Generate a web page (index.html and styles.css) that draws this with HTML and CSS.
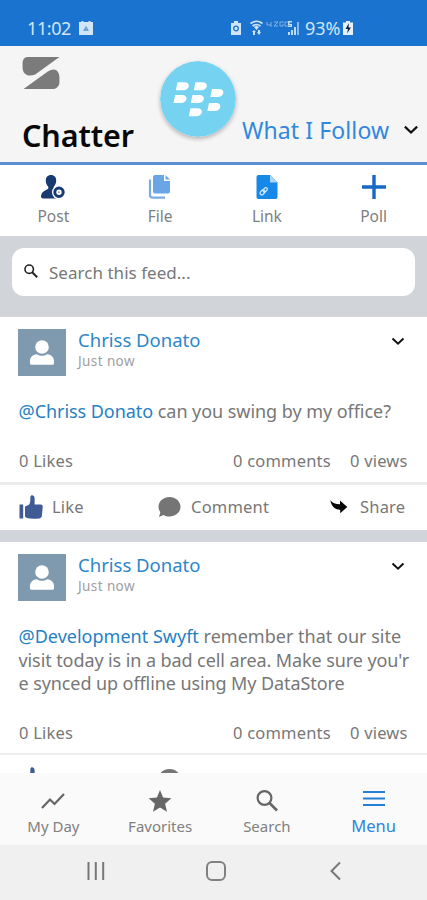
FILE: index.html
```html
<!DOCTYPE html>
<html lang="en">
<head>
<meta charset="utf-8">
<title>Chatter</title>
<link rel="stylesheet" href="styles.css">
</head>
<body>
<svg class="defs" aria-hidden="true">
  <symbol id="person" viewBox="0 0 48 47"><circle cx="24" cy="18" r="6.800" fill="#fff"/><path d="M12 34.500v-2.500c0-4 3-6.500 7-6.700 3 2 7 2 10 0 4 .2 7 2.700 7 6.700v2.500q0 1.300-1.500 1.300h-21q-1.500 0-1.500-1.300z" fill="#fff"/></symbol>
  <symbol id="chevron" viewBox="0 0 14 9"><path d="M1.500 1.500 7 6.700l5.500-5.200" fill="none" stroke="#111" stroke-width="2"/></symbol>
  <symbol id="thumb" viewBox="0 0 24 24"><path d="M.5 9.500h3.700v14H.5zM6 11.500l4-1.800c1.500-2 1.200-4 1.400-7.700.2-2.700 4-2.300 4.200 1v6.500h6c1.600 0 2.300 1 2.100 2.600l-.8 8.700c-.2 1.600-1 2.400-2.500 2.600-4.400.5-9 .6-12.400-.4l-2-1.200z" fill="#3f5a94"/></symbol>
  <symbol id="bubble" viewBox="0 0 22 20"><path d="M11 0c6 0 11 4.300 11 9.800s-5 9.700-11 9.700c-2.300 0-4.300-.5-6-1.500L.5 20l1.300-4.800A9 9 0 0 1 0 9.800C0 4.300 5 0 11 0z" fill="#757575"/></symbol>
  <symbol id="share" viewBox="0 0 18 15"><path d="M.3 1c2 3.200 5.200 4.300 9.700 4.300V1.500L17.300 8 10.200 14.200v-3.500C5.300 11 1.300 7.500.3 1z" fill="#080808"/></symbol>
</svg>
<div class="phone">
  <div class="status">
    <span class="clock">11:02</span>
    <svg class="cal" viewBox="0 0 14 14"><path d="M0 1h2.500V0h2v1h5V0h2v1H14v13H0z" fill="#d2e5f8"/><path d="M7 4.500 10 10H4z" fill="#6ca3dd"/></svg>
    <svg class="signals" viewBox="0 0 70 18">
      <path d="M1 4h3V2h4v2h3v12H1z" fill="#d2e5f8"/><circle cx="6" cy="9.500" r="2.300" fill="none" stroke="#1a73ce" stroke-width="1.300"/>
      <path d="M20.500 4.500q6-4.500 12 0M22.500 7q4-3 8 0" fill="none" stroke="#d2e5f8" stroke-width="1.700"/><path d="m24 8 2.500-1.500L29 8l-2.500 3zM22 13l2-2 2 2h-1v3h-2v-3zM27 13h1v-2h2v2h1l-2 3z" fill="#d2e5f8"/>
      <path d="M37 3v3h4m0-3v5m3-5h4l-4 4h4m6-4h-4v4h3V5m6-2h-4v4h4" fill="none" stroke="#8ab8e8" stroke-width=".9"/>
      <path d="M58 2h4v1.500h-2.500V5H62v3h-4V6.500h2.500V6H58zM58 13h2v3h-2zM61 11h2v5h-2zM64 8h2v8h-2z" fill="#c0dbf5"/><path d="M67 3h2v13h-2z" fill="#8ab8e8"/>
    </svg>
    <span class="percent">93%</span>
    <svg class="battery" viewBox="0 0 10 14"><path d="M0 1.500h3V0h4v1.500h3V14H0z" fill="#e4f0fb"/><path d="M6 2 2.500 8H5l-1 4.500L8 6.500H5.500z" fill="#123"/></svg>
  </div>
  <header class="header">
    <div class="brand">
      <svg class="logo" viewBox="0 0 38 33"><path d="M5 0h33L13 18C5 21 0 17 0 11V6c0-3 2-6 5-6zM1 33 26 15c7-5 12-1 12 6v5c0 4-3 7-7 7z" fill="#7b7b7b"/></svg>
      <h1 class="title">Chatter</h1>
    </div>
    <div class="filter"><span class="filter-name">What I Follow</span><svg class="filter-chevron"><use href="#chevron"/></svg></div>
    <svg class="badge" viewBox="0 0 76 76">
      <circle cx="38" cy="38" r="38" fill="#75d3f1"/>
      <g fill="#fff">
        <path id="seg" d="M17.500 21.300h7c6.500 0 5.500 8-1.500 8h-7.200z"/>
        <use href="#seg" x="18"/><use href="#seg" x="-2.300" y="12.700"/><use href="#seg" x="15" y="12.700"/>
        <use href="#seg" x="34.500" y="6.700"/><use href="#seg" x="31.500" y="20.700"/><use href="#seg" x="13" y="26"/>
      </g>
    </svg>
  </header>
  <nav class="actions">
    <div class="action"><svg viewBox="0 0 24 24"><path d="M10 0c3.300 0 5.200 2.300 5.200 5.500 0 2.700-1 4.800-2.500 6.200v2l4 1.300v8.500H2q-2 0-2-2c0-4 3.500-6 7.300-7.800v-2C5.700 10.300 4.800 8.200 4.800 5.500 4.800 2.300 6.700 0 10 0z" fill="#173a70"/><circle cx="18" cy="17.300" r="7" fill="#fff"/><circle cx="18" cy="17.300" r="4.200" fill="#fff" stroke="#173a70" stroke-width="3"/><circle cx="18" cy="17.300" r="1" fill="#8fa3c0"/></svg><span class="post-label">Post</span></div>
    <div class="action"><svg viewBox="0 0 24 24"><path d="M7 0h9v6h6v10.500q0 2-2 2H7q-2 0-2-2V2q0-2 2-2zM17.500 0 22 4.500h-4.500z" fill="#6aa6e5"/><path d="M2 4.500V20q0 2.700 2.700 2.700H17" fill="none" stroke="#76ade7" stroke-width="2.200"/></svg><span class="file-label">File</span></div>
    <div class="action"><svg viewBox="0 0 24 24"><path d="M3.500 0H15l7.500 7.500V22q0 2-2 2h-17q-2 0-2-2V2q0-2 2-2z" fill="#1689e8"/><path d="M15 0v7.500h7.500z" fill="#a9d3f7"/><g fill="none" stroke="#d9edff" stroke-width="1.200"><rect x="4.500" y="15.500" width="5.500" height="3.500" rx="1.700" transform="rotate(-48 7.500 17)"/><rect x="7.500" y="13" width="5" height="3" rx="1.500" transform="rotate(-48 10.500 14.500)"/></g></svg><span class="link-label">Link</span></div>
    <div class="action"><svg viewBox="0 0 24 24"><path d="M12 0v24M0 12h24" stroke="#1769c5" stroke-width="3.400"/></svg><span class="poll-label">Poll</span></div>
  </nav>
  <div class="search-band"><div class="search-box"><svg viewBox="0 0 14 14"><circle cx="5.200" cy="5.200" r="4.200" fill="none" stroke="#222" stroke-width="1.600"/><path d="m8.200 8.200 5 5" stroke="#222" stroke-width="2"/></svg><span>Search this feed...</span></div></div>
  <main class="feed">
    <article class="post">
      <div class="post-head"><svg class="avatar"><use href="#person"/></svg><div class="who"><div class="name">Chriss Donato</div><div class="time">Just now</div></div><svg class="post-chevron"><use href="#chevron"/></svg></div>
      <div class="body"><div class="line wide"><b>@Chriss Donato</b> can you swing by my office?</div></div>
      <div class="counts"><span class="likes">0 Likes</span><span class="comments">0 comments</span><span class="views">0 views</span></div>
      <div class="post-actions"><span class="like"><svg><use href="#thumb"/></svg>Like</span><span class="comment"><svg><use href="#bubble"/></svg>Comment</span><span class="share"><svg><use href="#share"/></svg>Share</span></div>
    </article>
    <article class="post second">
      <div class="post-head"><svg class="avatar"><use href="#person"/></svg><div class="who"><div class="name">Chriss Donato</div><div class="time">Just now</div></div><svg class="post-chevron"><use href="#chevron"/></svg></div>
      <div class="body"><div class="line wider"><b>@Development Swyft</b> remember that our site</div><div class="line">visit today is in a bad cell area. Make sure you'r</div><div class="line">e synced up offline using My DataStore</div></div>
      <div class="counts"><span class="likes">0 Likes</span><span class="comments">0 comments</span><span class="views">0 views</span></div>
      <div class="post-actions"><span class="like"><svg><use href="#thumb"/></svg>Like</span><span class="comment"><svg><use href="#bubble"/></svg>Comment</span><span class="share"><svg><use href="#share"/></svg>Share</span></div>
    </article>
  </main>
  <nav class="tabs">
    <div class="tab"><svg viewBox="0 0 24 24"><path d="m1 19 8-8.500 4.500 4.500L23 5" fill="none" stroke="#666" stroke-width="2.200"/></svg><span class="day">My Day</span></div>
    <div class="tab"><svg viewBox="0 0 24 24"><path d="m12 1 3.100 7.600 8.200.7-6.200 5.400 1.900 8-7-4.300-7 4.300 1.900-8L.7 9.300l8.200-.7z" fill="#666"/></svg><span class="fav">Favorites</span></div>
    <div class="tab"><svg viewBox="0 0 24 24"><circle cx="9.500" cy="9" r="6.900" fill="none" stroke="#666" stroke-width="2.200"/><path d="m14.500 14 7.500 7.500" stroke="#666" stroke-width="2.600"/></svg><span class="find">Search</span></div>
    <div class="tab current"><svg viewBox="0 0 24 24"><path d="M1 3h22M1 9.500h22M1 16h22" stroke="#267fd6" stroke-width="2.200"/></svg><span class="menu">Menu</span></div>
  </nav>
  <div class="system">
    <svg viewBox="0 0 20 20"><path d="M2.500 1v18M9.800 1v18M17.200 1v18" stroke="#777" stroke-width="2"/></svg>
    <svg viewBox="0 0 20 20"><rect x="1" y="1" width="18" height="18" rx="5" fill="none" stroke="#808080" stroke-width="2"/></svg>
    <svg viewBox="0 0 20 20"><path d="M14 1.500 5.500 10l8.500 8.500" fill="none" stroke="#777" stroke-width="2"/></svg>
  </div>
</div>
</body>
</html>
```
FILE: styles.css
```css
* { box-sizing: border-box; }
body { margin: 0; font-family: "Noto Sans", "Open Sans", sans-serif; color: #777; }
svg { display: block; flex: none; }
span, .line, .name, .time { white-space: nowrap; }
.defs { width: 0; height: 0; position: absolute; }
.phone { width: 427px; height: 900px; display: flex; flex-direction: column; overflow: hidden; background: #fff; }
.phone > * { flex: none; }

.status { height: 46px; background: #1a73ce; display: flex; align-items: center; padding: 10px 0 0 27px; color: #d2e5f8; font-size: 18px; line-height: 24px; }
.clock { width: 52px; letter-spacing: -.4px; }
.cal { width: 14px; height: 14px; }
.signals { width: 70px; height: 18px; margin-left: 137px; }
.percent { width: 38px; margin-left: 5px; letter-spacing: -.1px; }
.battery { width: 10px; height: 14px; }

.header { position: relative; height: 119px; background: #f5f5f5; border-bottom: 3px solid #5b90d0; display: flex; justify-content: space-between; }
.brand { padding: 11px 0 0 22px; }
.logo { width: 38px; height: 32px; }
.title { margin: 26px 0 0; font-size: 30.500px; line-height: 40px; font-weight: 600; letter-spacing: -.1px; color: #080808; }
.filter { display: flex; align-items: center; height: 32px; margin: 68px 8px 0 0; }
.filter-name { width: 161px; font-size: 23px; line-height: 32px; letter-spacing: .1px; color: #3088dd; }
.filter-chevron { width: 16px; height: 10px; }
.badge { position: absolute; left: 160px; top: 15px; width: 76px; height: 76px; border-radius: 50%; box-shadow: 0 2px 4px #0004; }

.actions { height: 71px; display: grid; grid-template-columns: repeat(4, 1fr); }
.action { display: flex; flex-direction: column; align-items: center; padding-top: 10px; font-size: 15.500px; line-height: 20px; color: #808080; }
.action svg { width: 24px; height: 24px; margin-bottom: 7px; }
.search-band { height: 81px; background: #d1d4d9; padding: 12px 12px 0; }
.search-box { height: 48px; background: #fff; border-radius: 12px; display: flex; align-items: center; padding-left: 12px; font-size: 17px; letter-spacing: .03px; color: #777; }
.search-box svg { width: 14px; height: 14px; margin: 0 11px 2px 0; }

.feed { height: 456px; overflow: hidden; background: #d1d4d9; }
.post { background: #fff; height: 213px; }
.post-head { display: flex; padding: 12px 22px 0 18px; height: 83px; }
.avatar { width: 48px; height: 47px; background: #7f99ae; }
.who { flex: 1; padding-left: 12px; margin-top: -1px; }
.name { font-size: 18.500px; line-height: 24px; color: #2d86c9; }
.time { font-size: 13.500px; line-height: 19px; letter-spacing: .4px; color: #a0a0a0; }
.post-chevron { width: 14px; height: 9px; margin-top: 8px; }
.body { padding-left: 18.500px; font-size: 18px; line-height: 23.500px; letter-spacing: -.09px; }
.wide { letter-spacing: -.05px; }
.wider { letter-spacing: .01px; }
.line b { font-weight: 400; color: #2581c4; }
.counts { display: flex; padding: 26px 0 0 19px; height: 58px; font-size: 16.500px; line-height: 22px; letter-spacing: .2px; }
.likes { width: 214px; }
.comments { width: 117px; }
.post-actions { border-top: 3px solid #ececec; display: flex; align-items: center; height: 48px; padding-bottom: 1px; font-size: 16.500px; letter-spacing: .2px; }
.post-actions span { display: flex; align-items: center; }
.like { margin-left: 19px; width: 139px; }
.like svg { width: 24px; height: 24px; margin-right: 9px; }
.comment { width: 172px; }
.comment svg { width: 23px; height: 20px; margin-right: 10px; }
.share svg { width: 18px; height: 15px; margin-right: 12px; }
.second { margin-top: 12px; height: 300px; }
.second .counts { height: 57px; }
.second .post-actions { border-top-width: 2px; height: 51px; padding-bottom: 0; }

.tabs { height: 72px; background: #fafafa; display: grid; grid-template-columns: repeat(4, 1fr); position: relative; }
.tab { display: flex; flex-direction: column; align-items: center; padding-top: 16px; font-size: 15px; line-height: 20px; color: #808080; }
.tab svg { width: 24px; height: 24px; margin-bottom: 3px; }
.current { color: #2f86da; font-size: 16.500px; }
.system { flex: 1; height: 55px; background: #f0f0f0; display: flex; gap: 100px; padding: 16px 0 0 86px; }
.system svg { width: 20px; height: 20px; }
```
